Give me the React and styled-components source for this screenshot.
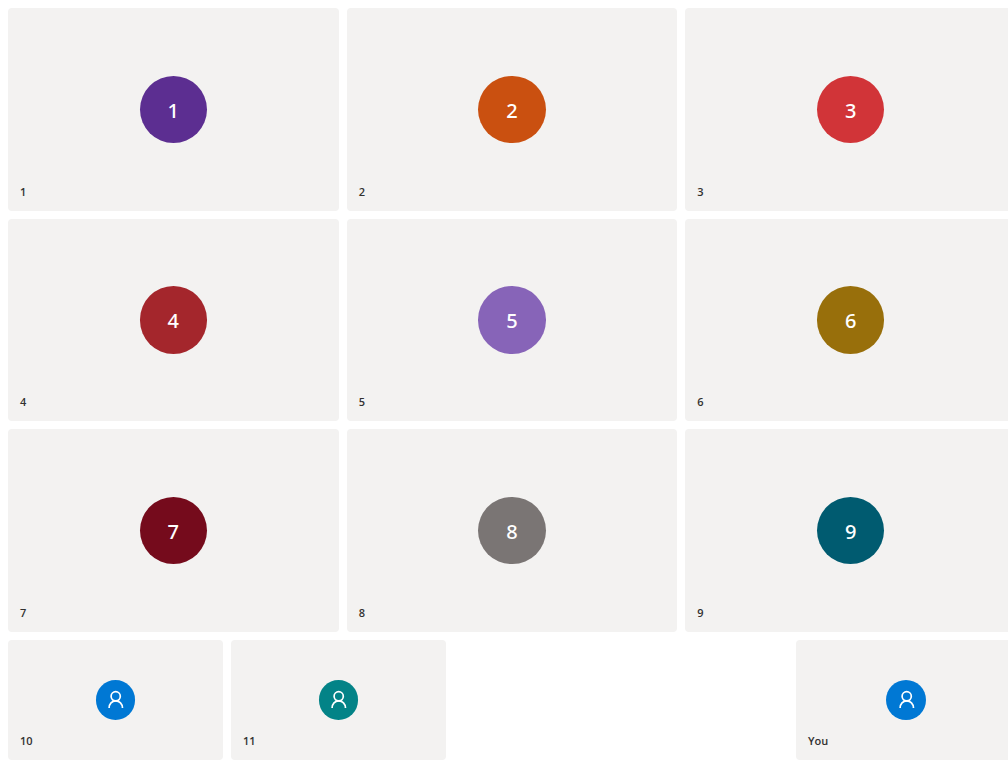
import React from "react";
import styled, { createGlobalStyle } from "styled-components";

const GlobalStyle = createGlobalStyle`
  *, *::before, *::after { box-sizing: border-box; }
  body {
    margin: 0;
    background: #ffffff;
    color: #323130;
    font-family: "Noto Sans", "Open Sans", sans-serif;
  }
`;

const Page = styled.div`
  display: flex;
  height: 100vh;
  padding: 8px 0 8px 8px;
  overflow: hidden;
`;

const Gallery = styled.main`
  display: flex;
  flex-direction: column;
  flex: 0 0 100vw;
  gap: 8px;
`;

const Grid = styled.section`
  flex: 1;
  min-height: 0;
  display: grid;
  grid-template-columns: repeat(3, 1fr);
  grid-template-rows: repeat(3, minmax(0, 1fr));
  gap: 8px;
`;

const Strip = styled.section`
  display: flex;
  gap: 8px;
  height: 120px;
`;

const Tile = styled.article`
  position: relative;
  display: flex;
  align-items: center;
  justify-content: center;
  background: #f3f2f1;
  border-radius: 4px;
`;

const StripTile = styled(Tile)`
  width: 215px;
`;

const LocalTile = styled(Tile)`
  width: 220px;
  margin-left: auto;
`;

const Avatar = styled.div`
  display: flex;
  align-items: center;
  justify-content: center;
  height: calc(100% / 3);
  aspect-ratio: 1;
  border-radius: 50%;
  background: ${(p) => p.$color};
  color: #ffffff;
`;

const Initials = styled.span`
  padding-top: 3px;
  font-size: 20px;
  font-weight: 500;
  line-height: 28px;
`;

const Name = styled.span`
  position: absolute;
  left: 12px;
  bottom: 11px;
  font-family: "Open Sans", "Noto Sans", sans-serif;
  font-size: 11px;
  font-weight: 600;
  line-height: 16px;
`;

const Icon = styled.svg`
  display: block;
  width: 20px;
  height: 20px;
  fill: none;
  stroke: #ffffff;
  stroke-width: 1.7;
`;

const people = [
  ["1", "#5c2e91"],
  ["2", "#ca5010"],
  ["3", "#d13438"],
  ["4", "#a4262c"],
  ["5", "#8764b8"],
  ["6", "#986f0b"],
  ["7", "#750b1c"],
  ["8", "#7a7574"],
  ["9", "#005b70"],
];

function Person({ color }) {
  return (
    <Avatar $color={color}>
      <Icon viewBox="0 0 20 20" aria-hidden="true">
        <circle cx="10.7" cy="6.3" r="4.6" />
        <path d="M4.1 18.1C4.1 13.8 7 10.9 10.7 10.9S17.5 13.8 17.5 18.1" />
      </Icon>
    </Avatar>
  );
}

export default function App() {
  return (
    <>
      <GlobalStyle />
      <Page>
        <Gallery>
          <Grid>
            {people.map(([name, color]) => (
              <Tile key={name}>
                <Avatar $color={color}>
                  <Initials>{name}</Initials>
                </Avatar>
                <Name>{name}</Name>
              </Tile>
            ))}
          </Grid>
          <Strip>
            <StripTile>
              <Person color="#0078d4" />
              <Name>10</Name>
            </StripTile>
            <StripTile>
              <Person color="#038387" />
              <Name>11</Name>
            </StripTile>
            <LocalTile>
              <Person color="#0078d4" />
              <Name>You</Name>
            </LocalTile>
          </Strip>
        </Gallery>
      </Page>
    </>
  );
}
